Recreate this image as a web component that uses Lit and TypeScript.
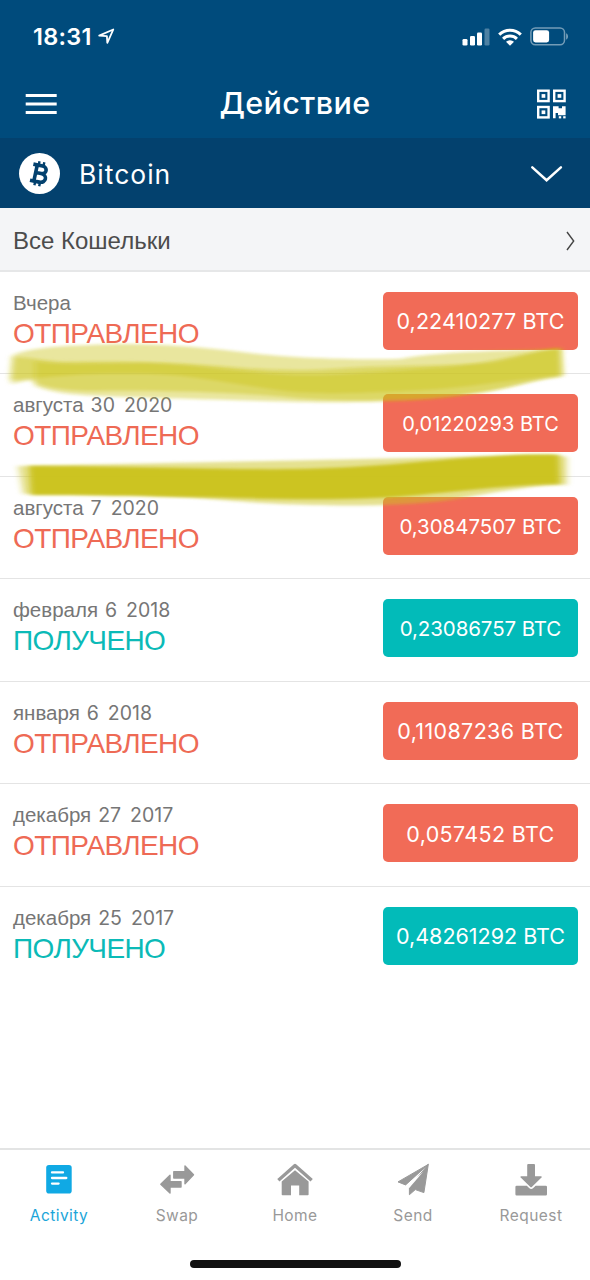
import { LitElement, html, svg, css, TemplateResult, SVGTemplateResult } from "lit";
import { customElement, property } from "lit/decorators.js";
import { classMap } from "lit/directives/class-map.js";
import { styleMap } from "lit/directives/style-map.js";

interface Transaction {
  day: string;
  digits: string;
  received: boolean;
  amount: string;
  size: number;
  spacing: number;
}

const TRANSACTIONS: Transaction[] = [
  { day: "Вчера", digits: "", received: false, amount: "0,22410277", size: 21.5, spacing: 0.1 },
  { day: "августа", digits: "30 2020", received: false, amount: "0,01220293", size: 20, spacing: 0 },
  { day: "августа", digits: "7 2020", received: false, amount: "0,30847507", size: 20.5, spacing: -0.05 },
  { day: "февраля", digits: "6 2018", received: true, amount: "0,23086757", size: 20.5, spacing: -0.1 },
  { day: "января", digits: "6 2018", received: false, amount: "0,11087236", size: 21.5, spacing: 0.35 },
  { day: "декабря", digits: "27 2017", received: false, amount: "0,057452", size: 21.5, spacing: 0.35 },
  { day: "декабря", digits: "25 2017", received: true, amount: "0,48261292", size: 21.5, spacing: 0 },
];

@customElement("wallet-status-bar")
export class WalletStatusBar extends LitElement {
  static styles = css`
    :host {
      display: flex;
      align-items: center;
      justify-content: space-between;
      height: 68px;
      padding: 5px 21px 0 33px;
      box-sizing: border-box;
      color: #fff;
      font-family: Inter, sans-serif;
    }

    .clock {
      display: flex;
      align-items: center;
      gap: 6px;
      font-size: 23.5px;
      font-weight: 600;
      letter-spacing: 0.3px;
    }

    .system {
      display: flex;
      align-items: center;
      gap: 8px;
    }

    svg {
      display: block;
    }
  `;

  protected render(): TemplateResult {
    return html`
      <div class="clock">
        <span>18:31</span>
        <svg width="17" height="17" viewBox="0 0 17 17">
          <path
            d="M1.2 7.6 15.3 1.5 9.3 14.8 8.9 8.1Z"
            fill="none"
            stroke="#fff"
            stroke-width="1.8"
            stroke-linejoin="round"
          />
        </svg>
      </div>
      <div class="system">
        <svg width="28" height="18" viewBox="0 0 28 18" fill="#fff">
          <rect x="0.5" y="11" width="5" height="6.5" rx="1.3" />
          <rect x="8" y="8" width="5" height="9.5" rx="1.3" />
          <rect x="15" y="4.5" width="5" height="13" rx="1.3" />
          <rect x="22.5" y="0.5" width="5" height="17" rx="1.3" opacity="0.3" />
        </svg>
        <svg width="24" height="18" viewBox="0 0 24 18">
          <g fill="none" stroke="#fff" stroke-width="3">
            <path d="M1.2 6.6a15.3 15.3 0 0 1 21.6 0" />
            <path d="M5.1 10.9a9.8 9.8 0 0 1 13.8 0" />
          </g>
          <path d="M8 13.8a5.7 5.7 0 0 1 8 0L12 17.7Z" fill="#fff" />
        </svg>
        <svg width="39" height="19" viewBox="0 0 39 19">
          <rect
            x="0.9"
            y="0.9"
            width="33.6"
            height="16.8"
            rx="4.4"
            fill="none"
            stroke="#fff"
            stroke-opacity="0.45"
            stroke-width="1.5"
          />
          <rect x="3.1" y="3.2" width="16" height="12.2" rx="2.4" fill="#fff" />
          <path d="M36.2 6.2c2.3 1 2.3 5.4 0 6.4Z" fill="#fff" opacity="0.5" />
        </svg>
      </div>
    `;
  }
}

@customElement("wallet-transaction")
export class WalletTransaction extends LitElement {
  @property({ attribute: false }) tx!: Transaction;

  static styles = css`
    :host {
      display: block;
      height: 102.5px;
      box-sizing: border-box;
      border-bottom: 1px solid #e4e4e4;
    }

    :host(:last-of-type) {
      border-bottom-color: transparent;
    }

    .row {
      display: flex;
      align-items: flex-start;
      justify-content: space-between;
      padding: 20px 12px 0 13px;
    }

    .info {
      font-family: "Liberation Sans", Arial, sans-serif;
    }

    .date {
      display: flex;
      align-items: baseline;
      gap: 7px;
      height: 23px;
      line-height: 21px;
      font-size: 20.5px;
      color: #767676;
    }

    .digits {
      font-family: Inter, sans-serif;
      font-size: 19.5px;
      word-spacing: 3.5px;
    }

    .status {
      font-size: 28px;
      line-height: 37px;
      color: #ee6a55;
      letter-spacing: -0.6px;
    }

    .status.received {
      color: #0bbab7;
    }

    .amount {
      display: flex;
      align-items: center;
      justify-content: center;
      width: 195px;
      height: 58px;
      padding-top: 1px;
      box-sizing: border-box;
      border-radius: 5px;
      background: #f16b57;
      color: #fff;
      font-family: Inter, sans-serif;
      white-space: nowrap;
    }

    .amount.received {
      background: #02bbb9;
    }
  `;

  protected render(): TemplateResult {
    const { day, digits, received, amount, size, spacing } = this.tx;

    return html`
      <div class="row">
        <div class="info">
          <div class="date">
            <span>${day}</span>
            ${digits ? html`<span class="digits">${digits}</span>` : ""}
          </div>
          <div class=${classMap({ status: true, received })}>
            ${received ? "ПОЛУЧЕНО" : "ОТПРАВЛЕНО"}
          </div>
        </div>
        <div
          class=${classMap({ amount: true, received })}
          style=${styleMap({ fontSize: `${size}px`, letterSpacing: `${spacing}px` })}
        >
          ${amount} BTC
        </div>
      </div>
    `;
  }
}

const TABS: { label: string; active?: boolean; icon: SVGTemplateResult }[] = [
  {
    label: "Activity",
    active: true,
    icon: svg`
      <rect x="5.2" y="4" width="25.5" height="28.5" rx="2.8" fill="#10a9e4" />
      <path d="M11 11.4h11M11 17h14.3M11 22.6h6.6" stroke="#fff" stroke-width="2.3" stroke-linecap="round" />`,
  },
  {
    label: "Swap",
    icon: svg`
      <g fill="#999" stroke="#999" stroke-width="1.4" stroke-linejoin="round">
        <path d="M14.8 10.8H26V4.9l8.5 8.9L26 22.7V17H14.8Z" />
        <path d="M22 20.6H11v-6.3L1.8 23.2l9.2 8.9V26h11Z" />
      </g>`,
  },
  {
    label: "Home",
    icon: svg`
      <path d="M2.6 18.2 18 4.6l15.4 13.6" fill="none" stroke="#999" stroke-width="3.4" stroke-linejoin="round" stroke-linecap="square" />
      <path d="M4.7 20.6 18 9.2l13.6 11.4v12.9a.8.8 0 0 1-.8.8h-8.6V24.6h-8.2v9.7H5.5a.8.8 0 0 1-.8-.8Z" fill="#999" />`,
  },
  {
    label: "Send",
    icon: svg`
      <g fill="#999" stroke="#999" stroke-linejoin="round">
        <path d="M3 20.9 33.3 3.4 10.6 23.9Z" />
        <path d="M33.3 3.4 28.9 31.6 20.3 28.6 14.4 33.7V26.2Z" />
        <path d="M28.4 10.4 10.8 25.9l3.4 1Z" fill="#fff" stroke="none" />
      </g>`,
  },
  {
    label: "Request",
    icon: svg`
      <path d="M14.2 3.9a1 1 0 0 1 1-1h5.8a1 1 0 0 1 1 1v11.3h5.9c1 0 1.2.8.6 1.4l-9.7 9.4a1 1 0 0 1-1.4 0l-9.7-9.4c-.6-.6-.4-1.4.6-1.4h5.9Z" fill="#999" />
      <path d="M3.6 24.7h10.2l2.3 2.3a3 3 0 0 0 4.2 0l2.3-2.3h10.2a1.2 1.2 0 0 1 1.2 1.2v7.4a1.2 1.2 0 0 1-1.2 1.2H3.6a1.2 1.2 0 0 1-1.2-1.2v-7.4a1.2 1.2 0 0 1 1.2-1.2Z" fill="#999" />`,
  },
];

@customElement("wallet-tab-bar")
export class WalletTabBar extends LitElement {
  static styles = css`
    :host {
      display: flex;
      flex-direction: column;
      align-items: center;
      height: 132px;
      box-sizing: border-box;
      border-top: 2px solid #e3e4e4;
      background: #fff;
    }

    .tabs {
      display: grid;
      grid-template-columns: repeat(5, 1fr);
      width: 100%;
      height: 110px;
    }

    .tab {
      display: flex;
      flex-direction: column;
      align-items: center;
      gap: 9px;
      padding-top: 11px;
      color: #999;
      font-family: Inter, sans-serif;
      font-size: 15.5px;
      line-height: 20px;
      letter-spacing: 0.45px;
    }

    .tab.active {
      color: #1ba5d9;
    }

    svg {
      display: block;
    }

    .home-indicator {
      width: 211px;
      height: 8px;
      border-radius: 4px;
      background: #111;
    }
  `;

  protected render(): TemplateResult {
    return html`
      <div class="tabs">
        ${TABS.map(
          (tab) => html`
            <div class=${classMap({ tab: true, active: !!tab.active })}>
              <svg width="36" height="36" viewBox="0 0 36 36">${tab.icon}</svg>
              <span>${tab.label}</span>
            </div>
          `,
        )}
      </div>
      <div class="home-indicator"></div>
    `;
  }
}

@customElement("app-root")
export class AppRoot extends LitElement {
  static styles = css`
    :host {
      position: relative;
      display: flex;
      flex-direction: column;
      width: 590px;
      height: 1280px;
      overflow: hidden;
      background: #fff;
    }

    svg {
      display: block;
    }

    .header {
      height: 138px;
      background: #004b7c;
    }

    .nav {
      display: grid;
      grid-template-columns: 32px 1fr 30px;
      align-items: center;
      height: 70px;
      padding: 1px 24px 0 25px;
      box-sizing: border-box;
    }

    .title {
      text-align: center;
      color: #fff;
      font-family: Inter, sans-serif;
      font-size: 30.5px;
      font-weight: 500;
      letter-spacing: 0.4px;
      line-height: 66px;
      margin: 0 3px 2px 0;
    }

    .coin {
      display: flex;
      align-items: center;
      height: 70px;
      padding: 1px 27px 0 19px;
      box-sizing: border-box;
      background: #03416e;
    }

    .coin-name {
      flex: 1;
      margin-left: 19px;
      color: #fff;
      font-family: Inter, sans-serif;
      font-size: 26.5px;
      letter-spacing: 1px;
    }

    .filter {
      display: flex;
      align-items: center;
      justify-content: space-between;
      height: 63.8px;
      box-sizing: border-box;
      padding: 4px 15px 0 13px;
      border-bottom: 2px solid #e6e7e8;
      background: #f4f5f7;
      color: #4c4c4c;
      font-family: "Liberation Sans", Arial, sans-serif;
      font-size: 24px;
    }

    .list {
      flex: 1;
    }

    .marker {
      position: absolute;
      top: 0;
      left: 0;
      pointer-events: none;
    }
  `;

  private renderMarker(): TemplateResult {
    return html`
      <svg class="marker" width="590" height="560" viewBox="0 0 590 560">
        <defs>
          <filter id="soft" x="-5%" y="-20%" width="110%" height="140%">
            <feGaussianBlur stdDeviation="3.2 1.5" />
          </filter>
        </defs>
        <g fill="#cbc31e">
          <g fill-opacity="0.42">
            <path
              filter="url(#soft)"
              d="M12 356C20 350 50 346 90 345C150 342 190 346 250 353C290 358 350 360 400 359C425 354 460 351 560 349L562 375C540 377 520 380 500 382C460 388 420 391 380 392C340 394 310 393 295 392C250 388 200 375 150 374C110 373 70 374 40 378L10 380Z"
            />
            <path
              filter="url(#soft)"
              d="M14 357C30 357 45 361 65 362C100 361 150 361 220 366C260 370 300 371 330 369C380 365 440 366 490 363C520 358 540 349 561 348L563 376C540 378 520 385 500 389C460 397 420 400 380 400C340 401 310 399 295 398C240 392 150 390 90 391C65 391 40 387 30 380L11 384Z"
            />
            <path
              filter="url(#soft)"
              d="M35 361C55 366 100 363 150 363C200 365 250 373 295 375C340 376 400 370 430 368C480 366 515 354 560 348L560 377C530 380 510 389 470 394C430 400 390 403 300 402C230 400 160 398 100 396C70 395 50 392 35 386Z"
            />
          </g>
          <path
            filter="url(#soft)"
            fill-opacity="0.5"
            d="M18 466L556 455L567 457L567 485C545 483 500 492 450 500C400 507 330 506 280 504C230 502 190 495 100 494L23 494Z"
          />
          <path
            filter="url(#soft)"
            fill-opacity="0.96"
            d="M29 466C120 466 230 470 295 469C370 468 420 461 480 457C510 455 535 454 559 455L560 484C510 485 460 491 420 495C380 499 330 500 280 499C200 497 100 495 31 495Z"
          />
        </g>
      </svg>
    `;
  }

  protected render(): TemplateResult {
    return html`
      <div class="header">
        <wallet-status-bar></wallet-status-bar>
        <div class="nav">
          <svg width="32" height="22" viewBox="0 0 32 22">
            <path d="M0.7 2.5h31M0.7 11h31M0.7 19.5h31" stroke="#fff" stroke-width="3.2" />
          </svg>
          <span class="title">Действие</span>
          <svg width="30" height="30" viewBox="0 0 30 30">
            <g fill="none" stroke="#fff" stroke-width="2.4">
              <rect x="2.2" y="1.7" width="10.4" height="10.4" />
              <rect x="18.2" y="1.7" width="10.4" height="10.4" />
              <rect x="2.2" y="18" width="10.4" height="10.4" />
            </g>
            <g fill="#fff">
              <rect x="5.6" y="5.1" width="3.7" height="3.7" />
              <rect x="21.6" y="5.1" width="3.7" height="3.7" />
              <rect x="5.6" y="21.4" width="3.7" height="3.7" />
              <path d="M17 17.2h5.6v2h3.4v-2h3.6v9h-7.6v-2.3h-2.4v5.3H17Z" />
              <rect x="22.8" y="27.2" width="2.4" height="2.2" />
              <rect x="27.2" y="27.2" width="2.4" height="2.2" />
            </g>
          </svg>
        </div>
      </div>
      <div class="coin">
        <svg width="41" height="41" viewBox="0 0 41 41">
          <circle cx="20.5" cy="20.5" r="20.5" fill="#fff" />
          <g fill="none" stroke="#03416e" transform="translate(20.5 20.8) rotate(12)">
            <path
              d="M-8 -8.2H1.5C7.2 -8.2 7.2 -0.6 1.5 -0.6H-3.8M1.5 -0.6C8.6 -0.6 8.6 8.2 1.5 8.2H-8M-4 -8.2V8.2"
              stroke-width="3.6"
            />
            <path d="M-2.6 -12.3v4M2.3 -12.3v4M-2.6 8.3v4M2.3 8.3v4" stroke-width="2.4" />
          </g>
        </svg>
        <span class="coin-name">Bitcoin</span>
        <svg width="33" height="18" viewBox="0 0 33 18">
          <path
            d="M2.3 2.4 16.6 15.2 30.9 2.4"
            fill="none"
            stroke="#fff"
            stroke-width="2.5"
            stroke-linecap="round"
          />
        </svg>
      </div>
      <div class="filter">
        <span>Все Кошельки</span>
        <svg width="9" height="20" viewBox="0 0 9 20">
          <path d="M1 1 7.7 10 1 19" fill="none" stroke="#444" stroke-width="1.4" />
        </svg>
      </div>
      <div class="list">
        ${TRANSACTIONS.map(
          (tx) => html`<wallet-transaction .tx=${tx}></wallet-transaction>`,
        )}
      </div>
      <wallet-tab-bar></wallet-tab-bar>
      ${this.renderMarker()}
    `;
  }
}
